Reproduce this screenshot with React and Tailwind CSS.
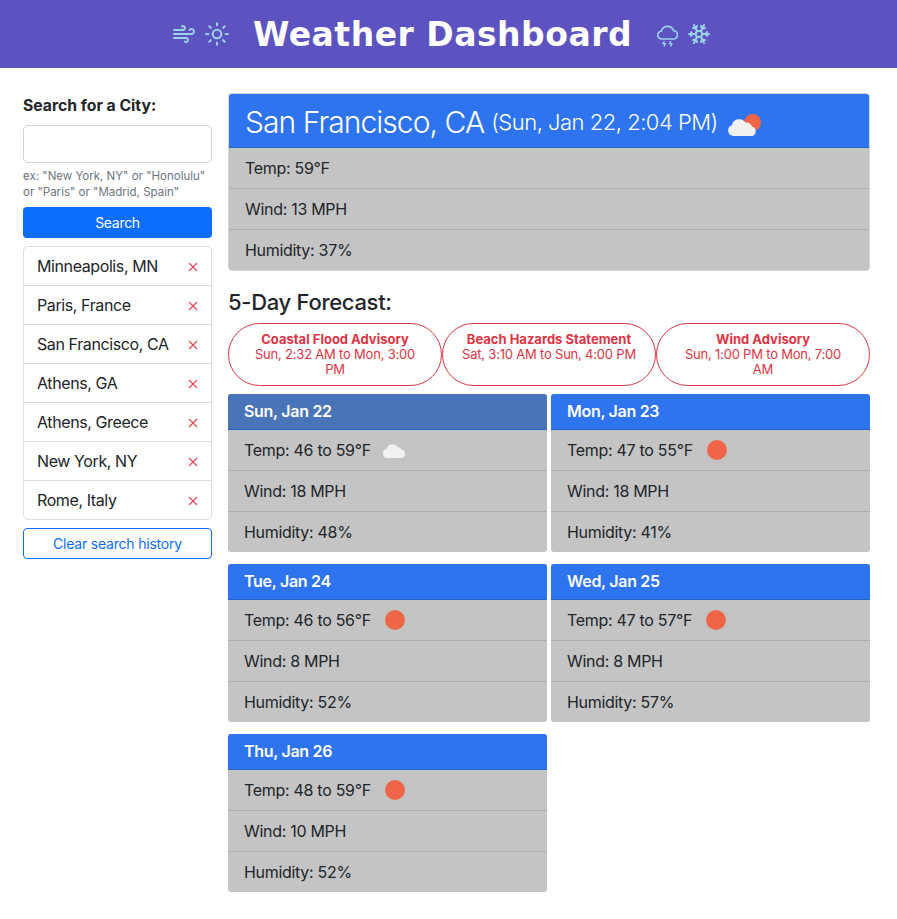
import React from 'react';
import { Wind, Sun, Snowflake } from 'lucide-react';

const cities = ['Minneapolis, MN', 'Paris, France', 'San Francisco, CA', 'Athens, GA', 'Athens, Greece', 'New York, NY', 'Rome, Italy'];

const alerts = [
  { title: 'Coastal Flood Advisory', time: 'Sun, 2:32 AM to Mon, 3:00 PM' },
  { title: 'Beach Hazards Statement', time: 'Sat, 3:10 AM to Sun, 4:00 PM' },
  { title: 'Wind Advisory', time: 'Sun, 1:00 PM to Mon, 7:00 AM' },
];

const days = [
  { date: 'Sun, Jan 22', temp: '46 to 59°F', wind: '18 MPH', humidity: '48%', icon: 'cloud', today: true },
  { date: 'Mon, Jan 23', temp: '47 to 55°F', wind: '18 MPH', humidity: '41%', icon: 'sun' },
  { date: 'Tue, Jan 24', temp: '46 to 56°F', wind: '8 MPH', humidity: '52%', icon: 'sun' },
  { date: 'Wed, Jan 25', temp: '47 to 57°F', wind: '8 MPH', humidity: '57%', icon: 'sun' },
  { date: 'Thu, Jan 26', temp: '48 to 59°F', wind: '10 MPH', humidity: '52%', icon: 'sun' },
];

const CloudShape = ({ className }) => (
  <svg viewBox="0 0 23 16" className={className} fill="#f1f1f1">
    <path d="M4.5 16a4.5 4.5 0 0 1-1-8.9A6.2 6.2 0 0 1 14.6 5a5 5 0 0 1 4 2.8A4.2 4.2 0 0 1 18.7 16Z" />
  </svg>
);

const SunCloud = () => (
  <svg viewBox="0 0 33 23" className="w-[33px] h-[23px] ml-[10px] mt-[6px]">
    <circle cx="24.5" cy="8.5" r="8.5" fill="#f06548" />
    <path fill="#f1f1f1" d="M5.5 22a5.5 5.5 0 0 1-1.6-10.7A7.5 7.5 0 0 1 17.5 8.5A6.5 6.5 0 0 1 24 12.5A5 5 0 0 1 24.5 22Z" />
  </svg>
);

const RainCloud = ({ className }) => (
  <svg viewBox="0 0 21 22" className={className} fill="none" stroke="currentColor" strokeWidth="1.7" strokeLinejoin="round">
    <path d="M5 14h11a4.2 4.2 0 0 0 .6-8.4A6.4 6.4 0 0 0 4.4 6.2 3.9 3.9 0 0 0 5 14Z" />
    <path d="M7.5 16l-1.6 2.6h2.6l-1.6 2.9M14 16l-1.6 2.6h2.6l-1.6 2.9" strokeWidth="1.4" />
  </svg>
);

const RemoveIcon = () => (
  <svg viewBox="0 0 10 10" className="w-[10px] h-[10px] mt-[2px]" fill="none" stroke="#e2455a" strokeWidth="1.1">
    <path d="M1 1l8 8M9 1l-8 8" />
  </svg>
);

const Row = ({ children }) => (
  <div className="h-[41px] flex items-center px-4 border-b border-[#adadad] last:border-b-0 last:h-[40px]">{children}</div>
);

const DayCard = ({ day }) => (
  <div className="h-[158px] rounded-[3px] overflow-hidden bg-[#c4c4c4]">
    <div className={`h-9 flex items-center px-4 pb-px font-semibold text-white border-b border-[#2a62c4] ${day.today ? 'bg-[#4a74b8]' : 'bg-[#2f74ef]'}`}>
      {day.date}
    </div>
    <Row>
      <span>Temp: {day.temp}</span>
      {day.icon === 'cloud' ? (
        <CloudShape className="w-[23px] h-4 ml-3" />
      ) : (
        <span className="w-5 h-5 ml-[14px] rounded-full bg-[#f06548]" />
      )}
    </Row>
    <Row>Wind: {day.wind}</Row>
    <Row>Humidity: {day.humidity}</Row>
  </div>
);

export default function App() {
  return (
    <div className="min-h-[919px] bg-white text-[#212529] tracking-[-0.3px] font-['Inter','Liberation_Sans',sans-serif]">
      <header className="h-[68px] bg-[#5c52c0] flex items-center justify-center pr-[14px] text-[#9bd3e6]">
        <Wind className="w-6 h-6" strokeWidth={1.9} />
        <Sun className="w-[26px] h-[26px] ml-2" strokeWidth={1.9} />
        <h1 className="ml-[23px] mr-[26px] w-[378px] whitespace-nowrap text-[33px] leading-none font-bold text-white tracking-[0.5px] font-['DejaVu_Sans',sans-serif]">Weather Dashboard</h1>
        <RainCloud className="w-[21px] h-[22px] mt-[3px]" />
        <Snowflake className="w-6 h-6 ml-[9px]" strokeWidth={2} />
      </header>

      <main className="flex gap-4 pl-[23px] pr-[27px] pt-[26px]">
        <aside className="w-[189px] shrink-0">
          <label className="block font-bold leading-[24px] text-[15.75px] tracking-normal">Search for a City:</label>
          <input type="text" className="mt-[7px] block w-full h-[38px] rounded-[5px] border border-[#ced4da] bg-white" />
          <p className="mt-[5px] text-[11.5px] leading-4 text-[#6c757d] tracking-normal whitespace-nowrap">ex: "New York, NY" or "Honolulu"<br />or "Paris" or "Madrid, Spain"</p>
          <button className="mt-[7px] w-full h-[31px] rounded-[4px] bg-[#0d6efd] text-white text-sm">Search</button>
          <ul className="mt-2 rounded-[5px] border border-[#dcdfe2] tracking-[-0.4px]">
            {cities.map((city) => (
              <li key={city} className="h-[39px] flex items-center justify-between pl-[13px] pr-[13px] border-b border-[#dcdfe2] last:border-b-0 last:h-[38px]">
                <span>{city}</span>
                <RemoveIcon />
              </li>
            ))}
          </ul>
          <button className="mt-2 w-full h-[31px] rounded-[4px] border border-[#0d6efd] text-[#0d6efd] text-sm tracking-[-0.2px]">Clear search history</button>
        </aside>

        <section className="flex-1 min-w-0 -mt-px">
          <div className="rounded-[4px] overflow-hidden bg-[#c4c4c4] border border-[#d5d5d5]">
            <div className="h-[54px] flex items-center px-4 pt-[3px] bg-[#2f74ef] text-white border-b border-[#2a62c4]">
              <span className="text-[30px] font-light tracking-[-0.95px]">San Francisco, CA</span>
              <span className="text-[22px] font-light ml-[7px] tracking-[-0.5px]">(Sun, Jan 22, 2:04 PM)</span>
              <SunCloud />
            </div>
            <Row>Temp: 59°F</Row>
            <Row>Wind: 13 MPH</Row>
            <Row>Humidity: 37%</Row>
          </div>

          <h2 className="mt-[15px] text-[22px] font-medium leading-[32px]">5-Day Forecast:</h2>

          <div className="mt-[5px] grid grid-cols-3">
            {alerts.map((a) => (
              <div key={a.title} className="h-[63px] rounded-[32px] border border-[#dc3545] px-[17px] pt-[8px] text-center text-[#dc3545] text-[13px] leading-[15px] tracking-[-0.2px]">
                <div className="font-bold tracking-normal">{a.title}</div>
                <div>{a.time}</div>
              </div>
            ))}
          </div>

          <div className="mt-2 grid grid-cols-2 gap-x-1 gap-y-3">
            {days.map((d) => <DayCard key={d.date} day={d} />)}
          </div>
        </section>
      </main>
    </div>
  );
}
